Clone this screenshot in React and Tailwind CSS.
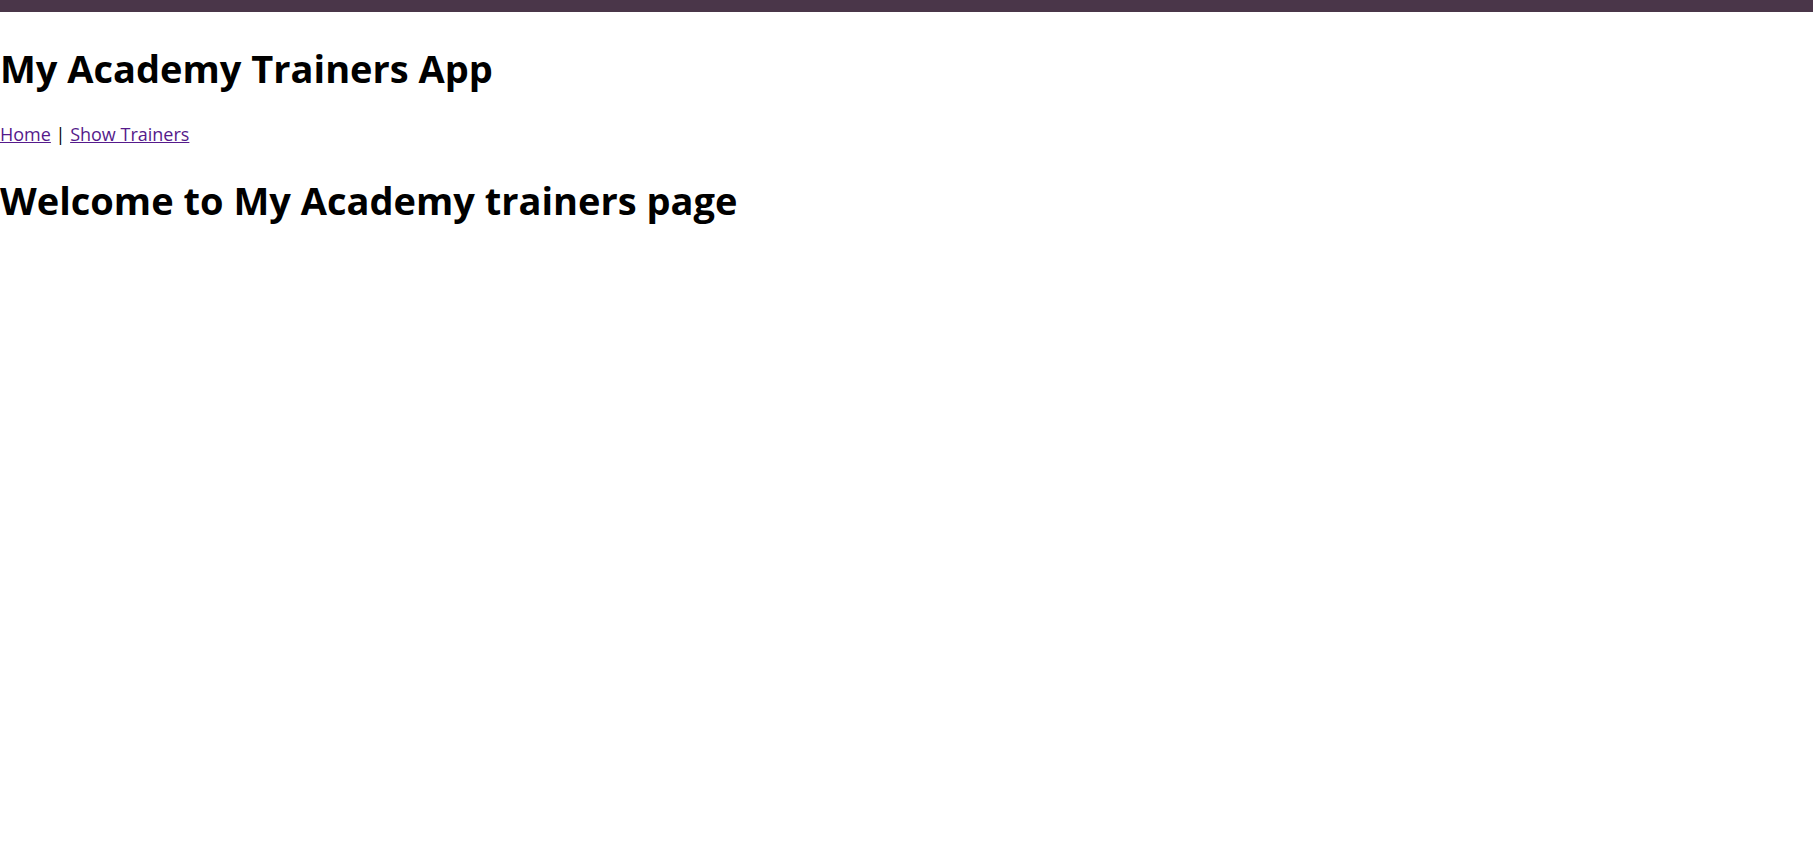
import React from 'react';

export default function App() {
  return (
    <div className="min-h-screen bg-white text-black font-['Open_Sans','Noto_Sans',sans-serif]">
      {/* top strip */}
      <div className="h-[12px] bg-[#4a3649]" />

      <div>
        <h1 className="mt-[31px] mb-[26px] text-[38px] font-bold leading-[1.33]">My Academy Trainers App</h1>
        <nav className="text-[18px] leading-[28px]">
          <a href="#" className="text-[#551a8b] underline">Home</a>
          {' | '}
          <a href="#" className="text-[#551a8b] underline">Show Trainers</a>
        </nav>
        <h1 className="mt-[27px] mb-[27px] text-[38px] font-bold leading-[1.33]">Welcome to My Academy trainers page</h1>
      </div>
    </div>
  );
}
